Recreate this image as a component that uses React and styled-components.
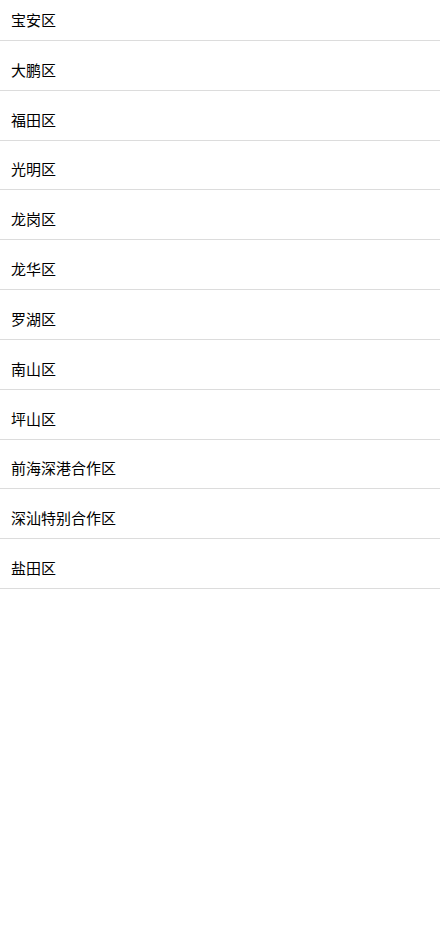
import React from "react";
import styled, { createGlobalStyle } from "styled-components";

const GlobalStyle = createGlobalStyle`
  html, body {
    margin: 0;
    padding: 0;
    background: #fff;
  }
  body {
    font-family: "Noto Sans CJK SC", "Noto Sans", sans-serif;
  }
`;

const DISTRICTS = [
  "宝安区",
  "大鹏区",
  "福田区",
  "光明区",
  "龙岗区",
  "龙华区",
  "罗湖区",
  "南山区",
  "坪山区",
  "前海深港合作区",
  "深汕特别合作区",
  "盐田区",
];

const List = styled.ul`
  list-style: none;
  margin: 0;
  padding: 0;
`;

const Item = styled.li`
  padding-top: 8.82px;
  border-bottom: 1px solid #dcdcdc;

  &:first-child {
    padding-top: 0;
  }
`;

const Label = styled.div`
  height: 40px;
  display: flex;
  align-items: center;
  padding-left: 11px;
  padding-bottom: 1px;
  box-sizing: border-box;
  font-size: 15px;
  color: #000;
`;

const App = () => {
  return (
    <>
      <GlobalStyle />
      <List>
        {DISTRICTS.map((name) => (
          <Item key={name}>
            <Label>{name}</Label>
          </Item>
        ))}
      </List>
    </>
  );
};

export default App;
